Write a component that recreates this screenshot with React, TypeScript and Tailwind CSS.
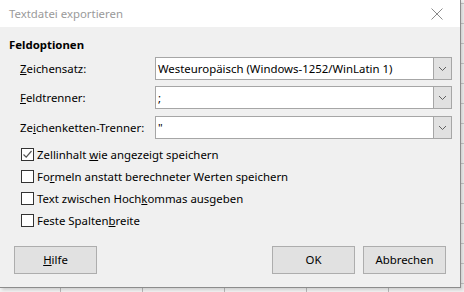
import React from "react";

function Chevron() {
  return (
    <svg width="9" height="6" viewBox="0 0 9 6" fill="none">
      <path d="M1 1 L4.5 4.5 L8 1" stroke="#606060" strokeWidth="1" />
    </svg>
  );
}

function Combo({ value }: { value: string }) {
  return (
    <div className="w-[297px] h-[23px] flex border border-[#a6a6a6] bg-white">
      <div className="flex-1 flex items-center pl-[2px] text-[11.4px] text-black whitespace-nowrap overflow-hidden">
        {value}
      </div>
      <div className="w-[18px] h-full bg-[#e1e1e1] border-l border-[#a6a6a6] flex items-center justify-center">
        <Chevron />
      </div>
    </div>
  );
}

function Check({ checked, children }: { checked?: boolean; children: React.ReactNode }) {
  return (
    <div className="flex items-center h-[13px]">
      <div className="w-[13px] h-[13px] border border-[#333333] bg-white flex items-center justify-center">
        {checked && (
          <svg width="11" height="11" viewBox="0 0 11 11" fill="none">
            <path d="M1.5 5.5 L4.2 8.2 L9.5 2" stroke="#555555" strokeWidth="1.2" />
          </svg>
        )}
      </div>
      <span className="ml-[3px] text-[11.4px] text-black leading-[16px]">{children}</span>
    </div>
  );
}

function Btn({ children }: { children: React.ReactNode }) {
  return (
    <div className="w-[83px] h-[28px] bg-[#e1e1e1] border border-[#adadad] flex items-center justify-center text-[11.4px] text-black">
      {children}
    </div>
  );
}

export default function App() {
  return (
    <div
      className="w-[464px] h-[292px] overflow-hidden bg-[#f2f2f2] [background-image:linear-gradient(to_right,#b8b8b8_1px,transparent_1px),linear-gradient(to_bottom,#c8c8c8_1px,transparent_1px)] [background-size:82px_20px] [background-position:60px_3px]"
      style={{ fontFamily: "'Noto Sans', sans-serif" }}
    >
      <div className="w-[461px] h-[288px] bg-[#f0f0f0] border-r border-b border-[#8c8c8c] shadow-[2px_2px_3px_rgba(0,0,0,0.15)] flex flex-col">
        <div className="h-[27px] bg-white flex items-center justify-between pl-[9px] pr-[17px] shrink-0">
          <span className="text-[11.4px] text-[#9a9a9a]">Textdatei exportieren</span>
          <svg width="12" height="12" viewBox="0 0 12 12" fill="none">
            <path d="M0.5 0.5 L11.5 11.5 M11.5 0.5 L0.5 11.5" stroke="#8a8a8a" strokeWidth="1" />
          </svg>
        </div>
        <div className="flex-1 flex flex-col pl-[9px] pt-[10px]">
          <div className="text-[11.4px] font-bold leading-[16px] text-black">Feldoptionen</div>
          <div className="flex flex-col pl-[11px] mt-[4px]">
            <div className="flex items-center h-[23px]">
              <span className="w-[135px] text-[11.4px] text-black"><u>Z</u>eichensatz:</span>
              <Combo value="Westeuropäisch (Windows-1252/WinLatin 1)" />
            </div>
            <div className="flex items-center h-[23px] mt-[6px]">
              <span className="w-[135px] text-[11.4px] text-black"><u>F</u>eldtrenner:</span>
              <Combo value=";" />
            </div>
            <div className="flex items-center h-[23px] mt-[7px]">
              <span className="w-[135px] text-[11.4px] text-black">Ze<u>i</u>chenketten-Trenner:</span>
              <Combo value={'"'} />
            </div>
          </div>
          <div className="flex flex-col pl-[12px] mt-[9px] gap-[9px]">
            <Check checked>Zellinhalt <u>w</u>ie angezeigt speichern</Check>
            <Check>Fo<u>r</u>meln anstatt berechneter Werten speichern</Check>
            <Check>Text zwischen Hoch<u>k</u>ommas ausgeben</Check>
            <Check>Feste Spalten<u>b</u>reite</Check>
          </div>
          <div className="mt-auto mb-[13px] flex items-center pl-[5px] pr-[14px]">
            <Btn><u>H</u>ilfe</Btn>
            <div className="flex-1" />
            <Btn>OK</Btn>
            <div className="w-[8px]" />
            <Btn>Abbrechen</Btn>
          </div>
        </div>
      </div>
    </div>
  );
}
